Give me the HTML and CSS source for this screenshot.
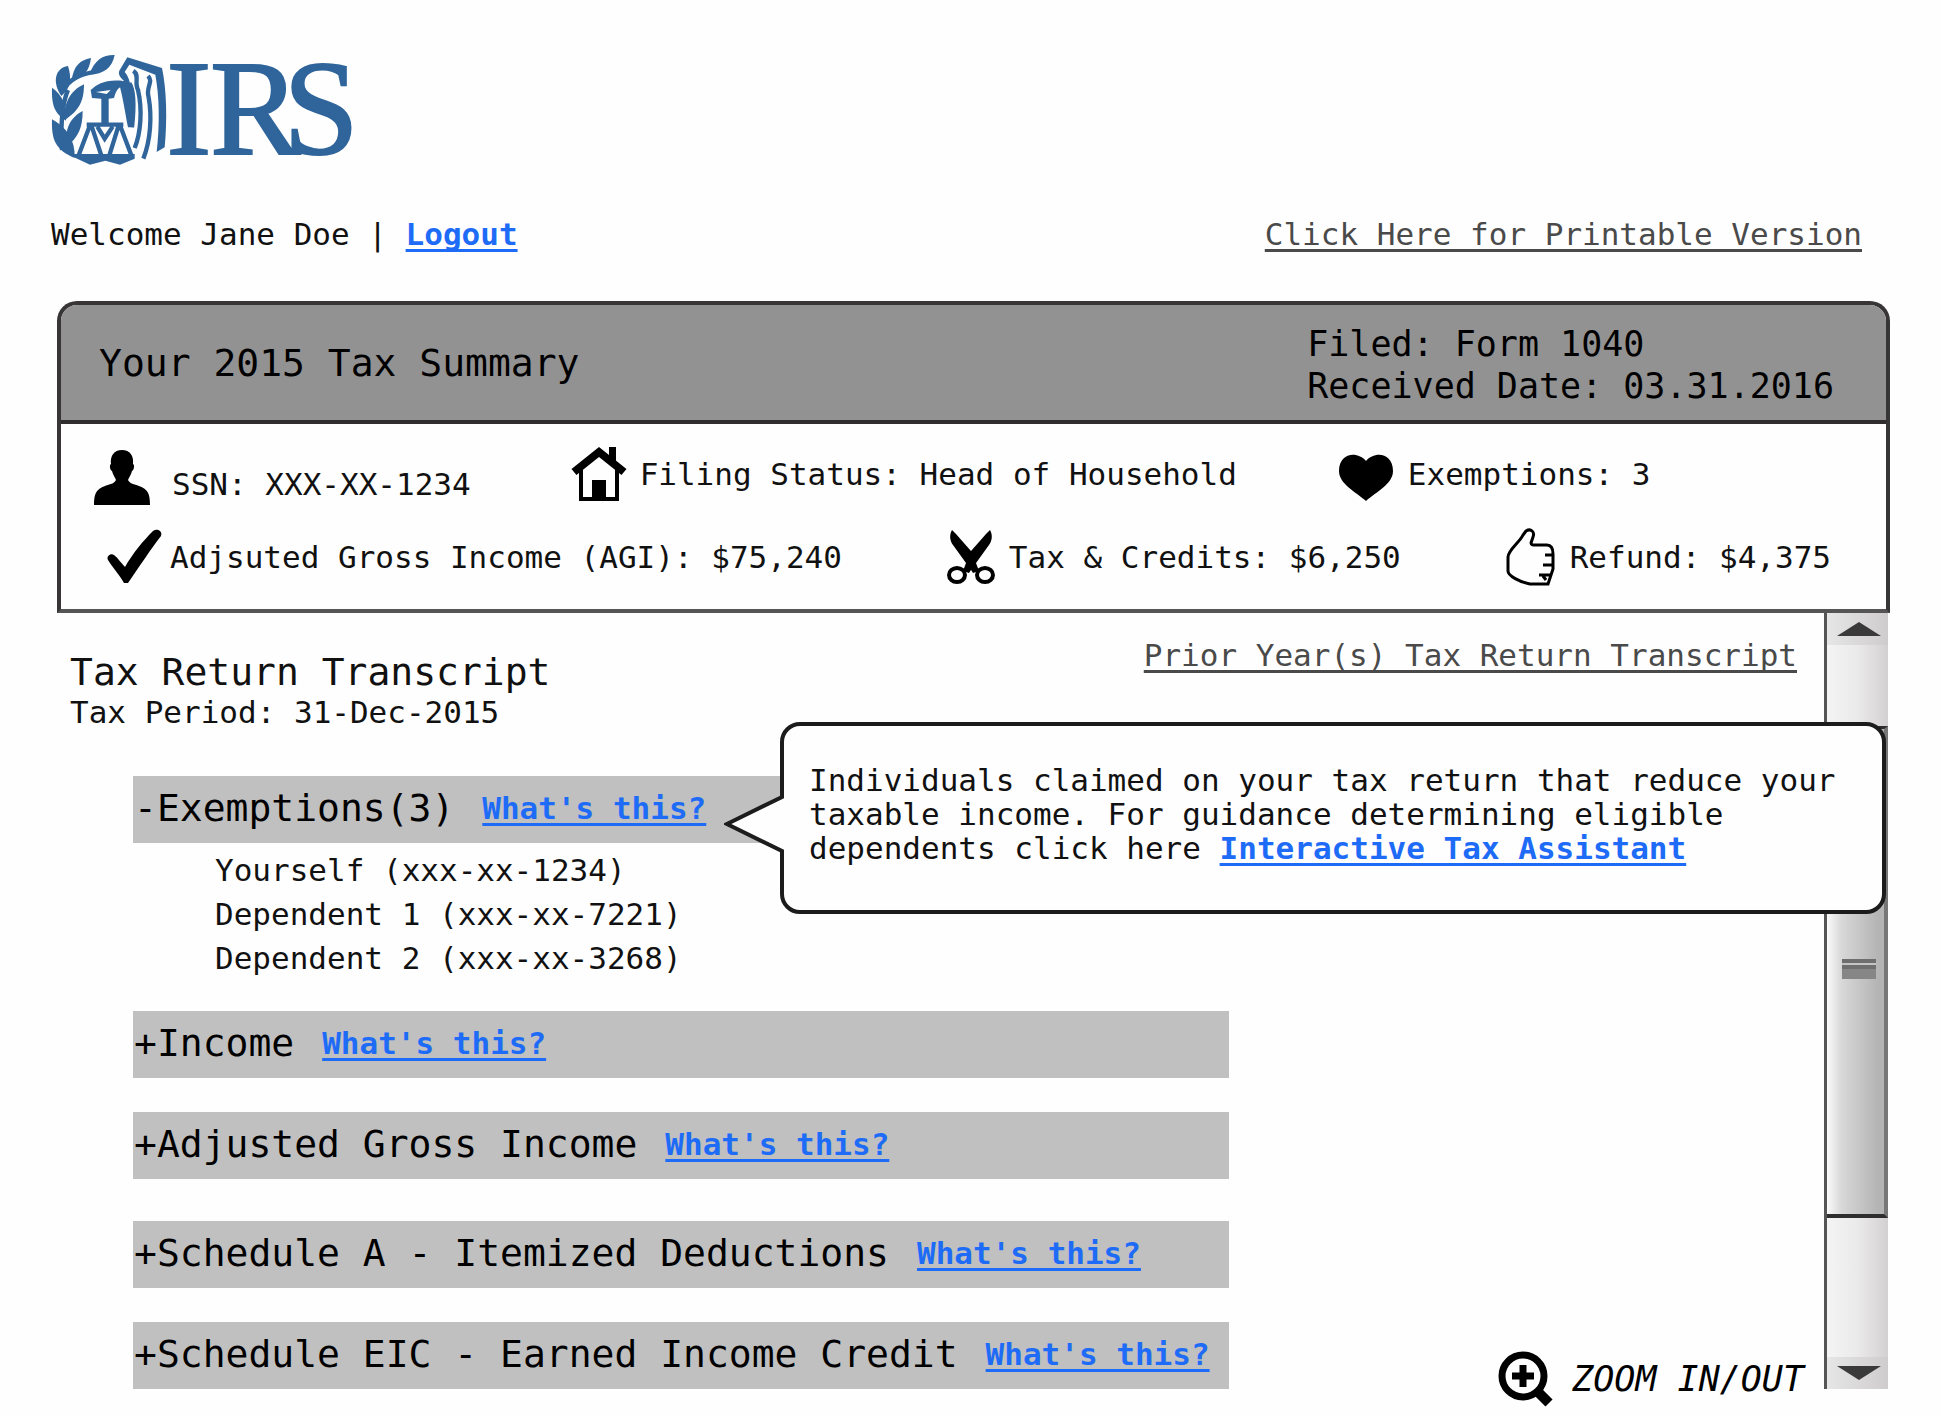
FILE: index.html
```html
<!DOCTYPE html>
<html lang="en">
<head>
<meta charset="utf-8">
<title>IRS - Your 2015 Tax Summary</title>
<link rel="stylesheet" href="styles.css">
</head>
<body>
<header class="site-header">
  <svg class="logo" viewBox="33 30 960 360" role="img" aria-label="IRS">
    <g class="logo-fill">
      <path d="M224 45C190 44 164 58 148 104C192 102 216 84 224 45Z"/>
      <path d="M153 54C118 62 102 76 94 124C132 112 148 92 153 54Z"/>
      <path d="M84 78C44 84 36 128 64 168C92 146 96 116 84 78Z"/>
      <path d="M36 143C34 196 44 220 78 242C84 198 66 164 36 143Z"/>
      <path d="M132 133C94 150 70 186 74 240C118 212 132 182 132 133Z"/>
      <path d="M36 238C34 300 46 330 104 354C106 300 80 262 36 238Z"/>
      <path d="M128 213C92 232 72 266 80 320C116 290 128 262 128 213Z"/>
      <path fill-rule="evenodd" d="M152 150C172 132 194 118 246 122L252 140C240 138 230 146 222 174L206 176V250H184V176L156 174ZM168 156L200 162L212 150Z"/>
      <path d="M102 342H198L284 342V356L240 374L196 362L150 374L102 352Z"/>
      <path d="M238 92L262 52L366 84C380 150 382 240 374 322L350 336C360 250 358 170 346 104L268 74L254 96C268 110 274 140 276 176L280 262H264C256 222 250 176 236 126L252 122C240 112 234 102 238 92Z"/>
    </g>
    <g class="logo-line">
      <path d="M70 150C90 116 120 104 160 96M66 330C60 270 66 190 84 150"/>
      <path d="M140 254H250M150 256L116 346M154 256L184 346M236 256L208 346M240 256L274 346M172 260L194 296L218 260"/>
      <path d="M280 92C300 106 282 128 294 150C308 210 302 280 284 324"/>
      <path d="M324 108C342 126 316 140 326 172C336 230 332 300 310 356"/>
      <path d="M268 130C282 150 284 190 276 262"/>
    </g>
    <text class="logo-text" y="341" x="379 510 730">IRS</text>
  </svg>
  <div class="user-bar">
    <p class="welcome">Welcome Jane Doe | <a class="link" href="#logout">Logout</a></p>
    <a class="plain-link" href="#print">Click Here for Printable Version</a>
  </div>
</header>

<main class="main">
  <section class="summary">
    <div class="summary-head">
      <h1 class="title">Your 2015 Tax Summary</h1>
      <p class="filed">Filed: Form 1040<br>Received Date: 03.31.2016</p>
    </div>
    <div class="summary-body">
      <div class="facts facts-top">
        <div class="fact fact-ssn">
          <svg class="icon" width="56" height="56" viewBox="0 0 56 56"><path d="M28 4C36 4 40 10 39 18C41 19 40 24 38 25C37 29 35 31 34 34C36 38 40 38 45 40C54 43 56 48 56 59H0C0 48 2 43 11 40C16 38 20 38 22 34C21 31 19 29 18 25C16 24 15 19 17 18C16 10 20 4 28 4Z"/></svg>
          <span>SSN: XXX-XX-1234</span>
        </div>
        <div class="fact">
          <svg class="icon" width="54" height="56" viewBox="0 0 54 56"><path class="stroke-thick" d="M2 26L27 6L52 26"/><path d="M37 1H44V18L37 12Z"/><path class="stroke-mid" d="M9 22V53H45V22"/><rect x="20" y="34" width="14" height="19"/></svg>
          <span>Filing Status: Head of Household</span>
        </div>
        <div class="fact">
          <svg class="icon" width="56" height="56" viewBox="0 0 56 56"><path d="M28 15C36 5 55 6 55 25C55 38 38 46 28 55C18 46 1 38 1 25C1 6 20 5 28 15Z"/></svg>
          <span>Exemptions: 3</span>
        </div>
      </div>
      <div class="facts facts-bottom">
        <div class="fact fact-tight">
          <svg class="icon" width="55" height="56" viewBox="0 0 55 56"><path d="M1 31C-1 27 4 24 7 26C11 29 14 34 18 38C26 24 36 12 46 2C50 -1 56 2 54 7C44 20 32 38 21 54H17C12 45 6 39 1 31Z"/></svg>
          <span>Adjsuted Gross Income (AGI): $75,240</span>
        </div>
        <div class="fact">
          <svg class="icon" width="48" height="56" viewBox="0 0 48 56"><path d="M5 1C2 6 3 12 6 16L19 34L16 42L22 44L31 30L9 5Z"/><path d="M43 1C46 6 45 12 42 16L29 34L32 42L26 44L17 30L39 5Z"/><ellipse class="stroke-mid" cx="10" cy="46" rx="8" ry="7"/><ellipse class="stroke-mid" cx="38" cy="46" rx="8" ry="7"/></svg>
          <span>Tax &amp; Credits: $6,250</span>
        </div>
        <div class="fact">
          <svg class="icon" width="50" height="56" viewBox="0 0 50 56"><path class="stroke-thin" d="M20 2C25 -1 29 3 27 8L25 14C25 16 27 16 30 16H41C46 16 47 20 47 25V40L42 55H24C14 53 2 47 2 42V28C2 21 14 13 17 6Z"/><path class="stroke-thin" d="M39 26H47M37 36H47M33 46H44M37 47L40 51"/></svg>
          <span>Refund: $4,375</span>
        </div>
      </div>
    </div>
  </section>

  <section class="transcript">
    <div class="content">
      <div class="content-head">
        <div class="period">
          <h2 class="title">Tax Return Transcript</h2>
          <p>Tax Period: 31-Dec-2015</p>
        </div>
        <a class="plain-link" href="#prior">Prior Year(s) Tax Return Transcript</a>
      </div>
      <div class="content-body">
        <div class="accordion">
          <div class="bar"><button class="toggle" aria-expanded="true">-Exemptions(3)</button><a class="link" href="#exemptions-help">What's this?</a></div>
          <ul class="people">
            <li>Yourself (xxx-xx-1234)</li>
            <li>Dependent 1 (xxx-xx-7221)</li>
            <li>Dependent 2 (xxx-xx-3268)</li>
          </ul>
          <div class="bar"><button class="toggle" aria-expanded="false">+Income</button><a class="link" href="#income-help">What's this?</a></div>
          <div class="bar bar-group-end"><button class="toggle" aria-expanded="false">+Adjusted Gross Income</button><a class="link" href="#agi-help">What's this?</a></div>
          <div class="bar"><button class="toggle" aria-expanded="false">+Schedule A - Itemized Deductions</button><a class="link" href="#schedule-a-help">What's this?</a></div>
          <div class="bar"><button class="toggle" aria-expanded="false">+Schedule EIC - Earned Income Credit</button><a class="link" href="#schedule-eic-help">What's this?</a></div>
        </div>
        <button class="zoom">
          <svg class="icon" width="54" height="56" viewBox="0 0 54 56"><circle class="stroke-zoom" cx="25" cy="25" r="21"/><path class="stroke-zoom" d="M25 14V36M14 25H36"/><path class="stroke-handle" d="M40 41L51 52"/></svg>
          <span>ZOOM IN/OUT</span>
        </button>
      </div>
    </div>

    <div class="scrollbar">
      <button class="scroll-button" aria-label="Scroll up"><svg width="44" height="14" viewBox="0 0 44 14"><path d="M22 0L44 14H0Z"/></svg></button>
      <div class="thumb"><span class="grip"></span></div>
      <button class="scroll-button" aria-label="Scroll down"><svg width="44" height="14" viewBox="0 0 44 14"><path d="M0 0H44L22 14Z"/></svg></button>
    </div>

    <aside class="callout">
      <svg class="callout-tail" width="60" height="60" viewBox="0 0 60 60"><path d="M60 2H58V3L3 30L58 57V58H60Z" class="tail-fill"/><path class="tail-line" d="M58 0V3L3 30L58 57V60"/></svg>
      <p>Individuals claimed on your tax return that reduce your taxable income. For guidance determining eligible dependents click here <a class="link" href="#assistant">Interactive Tax Assistant</a></p>
    </aside>
  </section>
</main>
</body>
</html>
```
FILE: styles.css
```css
* {
  box-sizing: border-box;
}

body {
  margin: 0;
  padding: 50px 50px 8px 51px;
  background: #fefefe;
  color: #111;
  font-family: "DejaVu Sans Mono", monospace;
  font-size: 31px;
  line-height: 36px;
}

h1, h2, p, ul {
  margin: 0;
  padding: 0;
  font-weight: normal;
}

button {
  padding: 0;
  border: 0;
  background: none;
  color: inherit;
  font: inherit;
}

svg {
  display: block;
  flex: none;
}

a {
  text-decoration: underline;
  text-decoration-thickness: 3px;
  text-underline-offset: 4px;
  text-decoration-skip-ink: none;
}

.link {
  color: #1d6bf6;
  font-weight: bold;
}

.plain-link {
  color: #4a4a4a;
}

.title {
  font-size: 38px;
  line-height: 44px;
}

/* Logo and user bar */
.logo {
  width: 320px;
  height: 120px;
  overflow: visible;
}

.logo-fill,
.logo-text {
  fill: #2f659b;
}

.logo-text {
  font-family: "Liberation Serif", serif;
  font-size: 408px;
  stroke: #2f659b;
  stroke-width: 6px;
}

.logo-line {
  fill: none;
  stroke: #2f659b;
  stroke-width: 13px;
}

.user-bar {
  display: flex;
  justify-content: space-between;
  margin-top: 46px;
  padding-right: 28px;
}

.main {
  margin: 49px 0 0 6px;
}

/* Summary panel */
.summary {
  border: 4px solid #383536;
  border-bottom-color: #555;
  border-radius: 20px 20px 0 0;
  overflow: hidden;
}

.summary-head {
  display: flex;
  align-items: center;
  justify-content: space-between;
  height: 119px;
  padding: 0 52px 0 38px;
  border-bottom: 4px solid #2f2d2e;
  background: #929292;
  color: #000;
}

.filed {
  padding-top: 4px;
  font-size: 35px;
  line-height: 42px;
}

.summary-body {
  display: flex;
  flex-direction: column;
  gap: 27px;
  padding: 22px 0 24px;
}

.facts {
  display: flex;
}

.facts-top {
  gap: 101px;
  padding-left: 33px;
}

.facts-bottom {
  justify-content: space-between;
  padding: 0 55px 0 46px;
}

.fact {
  display: flex;
  align-items: center;
  gap: 14px;
}

.fact-ssn {
  align-items: flex-end;
  gap: 22px;
}

.fact-tight {
  gap: 8px;
}

.icon {
  overflow: visible;
  fill: #000;
}

.stroke-thin,
.stroke-mid,
.stroke-thick,
.stroke-zoom,
.stroke-handle {
  fill: none;
  stroke: #000;
  stroke-width: 4px;
}

.stroke-thin {
  stroke-width: 3px;
}

.stroke-thick {
  stroke-width: 8px;
}

.stroke-zoom {
  stroke-width: 7px;
}

.stroke-handle {
  stroke-width: 10px;
}

/* Transcript */
.transcript {
  position: relative;
  display: flex;
  padding-right: 2px;
}

.content {
  flex: 1;
  padding: 24px 0 0 13px;
}

.content-head {
  display: flex;
  justify-content: space-between;
  padding-right: 27px;
}

.period {
  padding-top: 13px;
}

.content-body {
  display: flex;
  align-items: flex-end;
  gap: 269px;
  margin-top: 46px;
  padding: 0 20px 0 63px;
}

.accordion {
  flex: 1;
  padding-bottom: 18px;
}

.bar {
  display: flex;
  align-items: center;
  gap: 28px;
  height: 67px;
  padding: 0 0 4px 1px;
  background: #c0c0c0;
}

.bar + .bar {
  margin-top: 34px;
}

.bar-group-end + .bar {
  margin-top: 42px;
}

.toggle {
  color: #000;
  font-size: 38px;
  line-height: 44px;
  white-space: nowrap;
}

.people {
  padding: 5px 0 31px 82px;
  line-height: 44px;
  list-style: none;
}

.zoom {
  display: flex;
  align-items: center;
  gap: 20px;
  color: #000;
  font-size: 35px;
  font-style: italic;
  white-space: nowrap;
}

/* Scroll bar */
.scrollbar {
  display: flex;
  flex-direction: column;
  width: 64px;
  margin-bottom: 18px;
  border-left: 3px solid #555;
  background: linear-gradient(to right, #f4f4f4, #ebeaea 50%, #d3d0d1);
}

.scroll-button {
  display: flex;
  align-items: center;
  justify-content: center;
  height: 32px;
  padding-left: 2px;
  background: linear-gradient(to right, #e6e6e6, #cfcccd);
  fill: #3a3a3a;
}

.thumb {
  flex: 1;
  margin: 81px 0 139px;
  padding: 230px 0 0 15px;
  border: solid #2e2e2e;
  border-width: 3px 0 4px;
  border-right: 4px solid #777;
  background: linear-gradient(to right, #fafafa, #d8d8d8 25%, #b4b4b4 90%);
}

.grip {
  display: block;
  width: 34px;
  height: 20px;
  background: linear-gradient(#6e6e6e 4px, #c4c4c4 4px 6px, #6e6e6e 6px 10px, #868686 10px);
}

/* Callout */
.callout {
  position: absolute;
  top: 109px;
  right: 4px;
  left: 723px;
  padding: 37px 20px 45px 25px;
  border: 4px solid #1c1c1c;
  border-radius: 20px;
  background: #fefefe;
  line-height: 34px;
}

.callout-tail {
  position: absolute;
  top: 68px;
  left: -60px;
}

.tail-fill {
  fill: #fefefe;
}

.tail-line {
  fill: none;
  stroke: #1c1c1c;
  stroke-width: 4px;
}
```
